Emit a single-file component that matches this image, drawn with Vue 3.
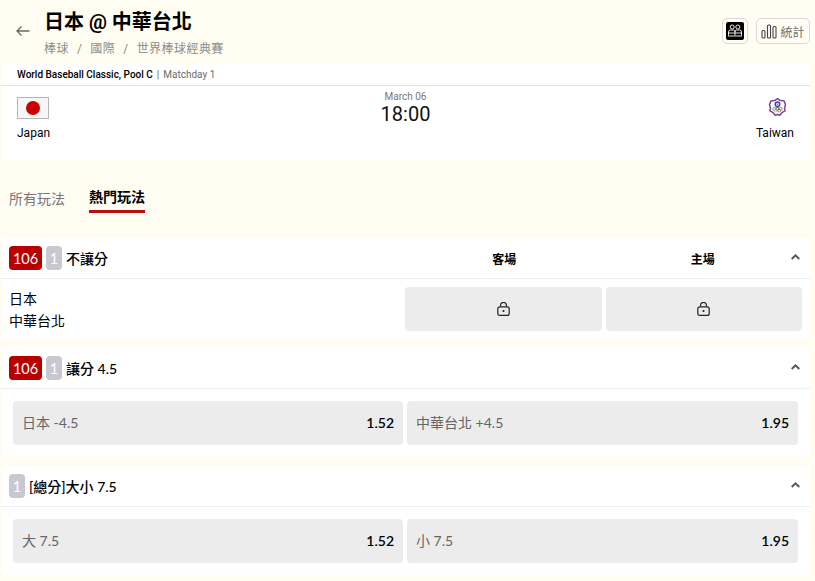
<script setup>
const markets = [
  { badges: ['106', '1'], title: '讓分 4.5', opts: [['日本 -4.5', '1.52'], ['中華台北 +4.5', '1.95']] },
  { badges: ['1'], title: '[總分]大小 7.5', opts: [['大 7.5', '1.52'], ['小 7.5', '1.95']] }
]
</script>

<template>
  <div class="page">
    <header class="top">
      <svg class="back" width="14" height="12" viewBox="0 0 14 12"><path d="M13.5 6H1M5.5 1.5 1 6l4.5 4.5" fill="none" stroke="#666" stroke-width="1.3"/></svg>
      <div class="heads">
        <h1>日本 @ 中華台北</h1>
        <div class="crumbs"><span>棒球</span><i>/</i><span>國際</span><i>/</i><span>世界棒球經典賽</span></div>
      </div>
      <div class="tools">
        <button class="tool square">
          <span class="blackbox">
            <svg width="16" height="16" viewBox="0 0 16 16" fill="none" stroke="#fff" stroke-width=".9">
              <circle cx="5.2" cy="4" r="2"/><circle cx="10.8" cy="4" r="2"/>
              <path d="M1.5 12.5V9Q1.5 7 3.5 7H6.5Q8 7 8 9V12.5M8 9Q8 7 9.5 7H12.5Q14.5 7 14.5 9V12.5M1 10h14M1 13h14"/>
            </svg>
          </span>
        </button>
        <button class="tool stat">
          <svg width="16" height="15" viewBox="0 0 16 15" fill="none" stroke="#444" stroke-width="1.1"><rect x="1" y="6.5" width="3" height="7.5" rx="1"/><rect x="6.5" y="1" width="3" height="13" rx="1"/><rect x="12" y="2.5" width="3" height="11.5" rx="1"/></svg>
          <span>統計</span>
        </button>
      </div>
    </header>

    <section class="match">
      <div class="league"><b>World Baseball Classic, Pool C</b><em>|</em><span>Matchday 1</span></div>
      <div class="teams">
        <div class="team">
          <span class="flag"><span></span></span>
          <span class="tname">Japan</span>
        </div>
        <div class="when"><small>March 06</small><strong>18:00</strong></div>
        <div class="team right">
          <svg class="tpe" width="19" height="20" viewBox="0 0 20 20">
            <path d="M10 1.2 13 3.2 17 3.6 18.4 7.5 17.4 11.5 18 14 14.5 16 12.5 18.6 10 17.8 7.5 18.6 5.5 16 2 14 2.6 11.5 1.6 7.5 3 3.6 7 3.2Z" fill="#fff" stroke="#7c4a90" stroke-width="1.6" stroke-linejoin="round"/>
            <circle cx="10" cy="7.2" r="2.4" fill="#fff" stroke="#3b4ba0" stroke-width="1.6"/>
            <circle cx="10" cy="7.2" r=".8" fill="#d33"/>
            <g fill="none" stroke-width=".8"><circle cx="6.6" cy="12" r="1.6" stroke="#3a7bc8"/><circle cx="10" cy="12" r="1.6" stroke="#333"/><circle cx="13.4" cy="12" r="1.6" stroke="#d44"/><circle cx="8.3" cy="13.6" r="1.6" stroke="#d9b33a"/><circle cx="11.7" cy="13.6" r="1.6" stroke="#3a9a55"/></g>
          </svg>
          <span class="tname">Taiwan</span>
        </div>
      </div>
    </section>

    <nav class="tabs">
      <span class="tab">所有玩法</span>
      <span class="tab active">熱門玩法</span>
    </nav>

    <section class="card first">
      <div class="chead">
        <span class="badge red">106</span><span class="badge grey">1</span>
        <span class="ctitle">不讓分</span>
        <div class="cols"><b>客場</b><b>主場</b></div>
        <svg class="chev" width="9" height="6" viewBox="0 0 9 6"><path d="M.7 5 4.5 1.4 8.3 5" fill="none" stroke="#555" stroke-width="1.9"/></svg>
      </div>
      <div class="moneyline">
        <div class="names"><div>日本</div><div>中華台北</div></div>
        <div class="locks">
          <div v-for="n in 2" :key="n" class="lock">
            <svg width="13" height="14" viewBox="0 0 13 14" fill="none" stroke="#222" stroke-width="1.2">
              <rect x=".8" y="4.8" width="11.4" height="8.6" rx="2"/>
              <path d="M3.5 4.6V3.4a3 3 0 0 1 6 0V4.6"/>
              <circle cx="6.5" cy="9" r="1.1" fill="#222" stroke="none"/>
            </svg>
          </div>
        </div>
      </div>
    </section>

    <section v-for="m in markets" :key="m.title" class="card">
      <div class="chead">
        <span v-for="b in m.badges" :key="b" class="badge" :class="b === '106' ? 'red' : 'grey'">{{ b }}</span>
        <span class="ctitle">{{ m.title }}</span>
        <svg class="chev" width="9" height="6" viewBox="0 0 9 6"><path d="M.7 5 4.5 1.4 8.3 5" fill="none" stroke="#555" stroke-width="1.9"/></svg>
      </div>
      <div class="opts">
        <div v-for="o in m.opts" :key="o[0]" class="opt"><span>{{ o[0] }}</span><b>{{ o[1] }}</b></div>
      </div>
    </section>
  </div>
</template>

<style>
html, body { margin: 0; background: #fffdf2; }
</style>

<style scoped>
.page {
  width: 815px;
  height: 581px;
  overflow: hidden;
  background: #fffdf2;
  font-family: Lato, "Noto Sans CJK TC", sans-serif;
  color: #000;
}
.top {
  height: 64px;
  display: flex;
  box-sizing: border-box;
  padding: 0 5px 0 16px;
}
.back { margin-top: 25px; }
.heads { margin-left: 14px; flex: 1; }
h1 {
  margin: 9px 0 0;
  font: 700 20px/27px Roboto, "Noto Sans CJK TC", sans-serif;
}
.crumbs {
  margin-top: 5px;
  font: 400 12px/16px Roboto, "Noto Sans CJK TC", sans-serif;
  color: #8c8c8c;
  letter-spacing: .45px;
}
.crumbs i { font-style: normal; margin: 0 8px; }
.tools { display: flex; gap: 8px; margin-top: 18px; align-items: flex-start; }
.tool {
  height: 26px;
  box-sizing: border-box;
  border: 1px solid #d9d9d9;
  border-radius: 5px;
  background: #fffdf5;
  padding: 0;
  display: flex;
  align-items: center;
  justify-content: center;
}
.square { width: 26px; }
.blackbox { width: 18px; height: 18px; background: #000; border-radius: 2px; display: flex; align-items: center; justify-content: center; }
.stat { width: 54px; gap: 3px; font: 400 12px "Noto Sans CJK TC", sans-serif; color: #6f6f6f; }
.match {
  margin-left: 1px;
  width: 809px;
  height: 96px;
  background: #fff;
  border-radius: 0 0 6px 6px;
}
.league {
  height: 22px;
  box-sizing: border-box;
  border-bottom: 1px solid #e3e3e3;
  padding: 0 16px;
  display: flex;
  align-items: center;
  font: 400 10px/20px Roboto, sans-serif;
  color: #6b6b6b;
}
.league b { font-weight: 500; color: #000; }
.league em { font-style: normal; margin: 0 4px; color: #666; }
.teams { display: flex; justify-content: space-between; padding: 0 16px; }
.team { display: flex; flex-direction: column; align-items: flex-start; width: 60px; }
.team.right { align-items: flex-end; }
.flag {
  width: 32px; height: 22px;
  box-sizing: border-box;
  margin-top: 11px;
  border: 1px solid #b5b5b5;
  background: #f6f6f6;
  display: flex; align-items: center; justify-content: center;
}
.flag span { width: 14px; height: 14px; border-radius: 50%; background: #cc0000; }
.tpe { margin-top: 11px; margin-right: 7px; margin-bottom: 2px; }
.tname { font: 400 12px/16px Roboto, sans-serif; margin-top: 6px; color: #000; }
.when { display: flex; flex-direction: column; align-items: center; margin-top: 5px; }
.when small { font: 400 10px/11px Roboto, sans-serif; color: #777; }
.when strong { font: 400 20px/24px Roboto, sans-serif; color: #111; }
.tabs { height: 78px; display: flex; box-sizing: border-box; padding: 27px 0 0 9px; gap: 24px; align-items: flex-start; }
.tab { font-size: 14px; line-height: 24px; height: 26px; color: #777; }
.tab.active { color: #000; font-weight: 700; border-bottom: 3px solid #bb0f0f; margin-top: -2px; height: 25px; }
.card {
  margin-left: 1px;
  width: 809px;
  background: #fff;
  border-radius: 4px;
  margin-bottom: 9px;
}
.chead {
  height: 41px;
  box-sizing: border-box;
  border-bottom: 1px solid #eeeef5;
  display: flex;
  align-items: center;
  gap: 4px;
  padding: 0 8px;
  position: relative;
}
.badge {
  height: 24px;
  line-height: 25px;
  border-radius: 4px;
  color: #fff;
  font-size: 14.5px;
  text-align: center;
}
.red { width: 33px; background: #b80000; }
.grey { width: 16px; background: #c8c8d0; }
.ctitle { font-size: 14px; font-weight: 500; flex: 1; }
.cols { position: absolute; left: 404px; width: 397px; display: flex; }
.cols b { flex: 1; text-align: center; font-size: 12px; font-weight: 700; }
.chev { margin-right: 2px; margin-bottom: 2px; }
.moneyline { display: flex; height: 60px; padding: 8px 8px 0 8px; box-sizing: border-box; justify-content: space-between; }
.names { font-size: 14px; line-height: 22px; font-weight: 400; padding-top: 1px; }
.locks { display: flex; gap: 4px; width: 397px; }
.lock { flex: 1; height: 44px; background: #ececec; border-radius: 4px; display: flex; align-items: center; justify-content: center; }
.opts { display: grid; grid-template-columns: 390px 391px; gap: 4px; padding: 12px; }
.opt {
  height: 44px;
  box-sizing: border-box;
  background: #ececec;
  border-radius: 4px;
  display: flex;
  justify-content: space-between;
  align-items: center;
  padding: 0 9px 2px;
  font-size: 14px;
  color: #666;
}
.opt b { color: #000; font-weight: 600; font-size: 14px; }
</style>
